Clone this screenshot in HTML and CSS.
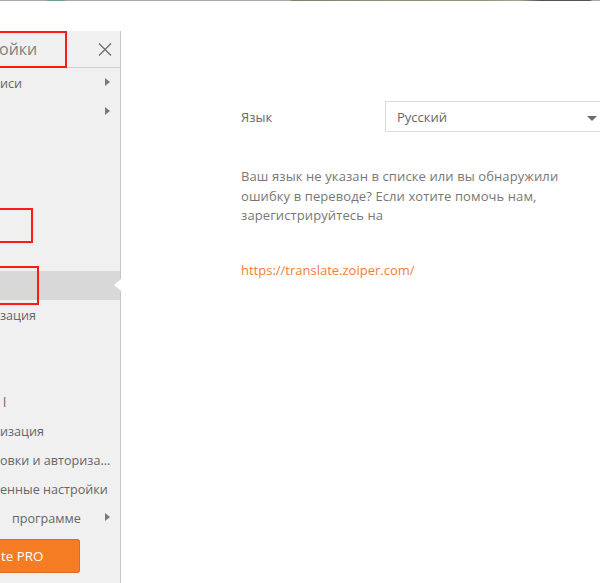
FILE: index.html
```html
<!DOCTYPE html>
<html lang="ru">
<head>
<meta charset="utf-8">
<title>Настройки</title>
<link rel="stylesheet" href="styles.css">
</head>
<body>
<div class="topstrip"></div>
<div class="window">
  <aside class="sidebar">
    <div class="side-head">
      <span class="side-title">ойки</span>
      <svg class="close" width="14" height="13" viewBox="0 0 14 13"><path d="M1 0.5 L13 12.5 M13 0.5 L1 12.5" stroke="#6a6a6a" stroke-width="1.2" fill="none"/></svg>
      <span class="mark mark-title"></span>
    </div>
    <ul class="menu">
      <li class="item has-sub">иси</li>
      <li class="item has-sub"></li>
      <li class="item"></li>
      <li class="item"></li>
      <li class="item"></li>
      <li class="item"></li>
      <li class="item"></li>
      <li class="item selected"><span class="notch"></span></li>
      <li class="item">зация</li>
      <li class="item"></li>
      <li class="item"></li>
      <li class="item"><span class="cut-l">l</span></li>
      <li class="item">изация</li>
      <li class="item">овки и авториза...</li>
      <li class="item">енные настройки</li>
      <li class="item has-sub"><span class="cut-o">программе</span></li>
    </ul>
    <div class="pro-wrap"><button class="pro">te PRO</button></div>
    <span class="mark mark-a"></span>
    <span class="mark mark-b"></span>
  </aside>
  <main class="main">
    <div class="lang-row">
      <span class="lang-label">Язык</span>
      <div class="select">
        <span>Русский</span>
        <span class="caret"></span>
      </div>
    </div>
    <p class="note">Ваш язык не указан в списке или вы обнаружили ошибку в переводе? Если хотите помочь нам, зарегистрируйтесь на</p>
    <a class="link" href="#">https://translate.zoiper.com/</a>
  </main>
</div>
</body>
</html>
```

FILE: styles.css
```css
* { box-sizing: border-box; }
html, body {
  margin: 0;
  padding: 0;
  width: 600px;
  height: 583px;
  overflow: hidden;
  background: #ffffff;
  font-family: "Open Sans", "Noto Sans", sans-serif;
}
.topstrip {
  height: 1px;
  background: linear-gradient(to right, #a9a9a9 0, #a9a9a9 45px, #6f9a8e 48px, #6f9a8e 64px, #a9a9a9 67px, #a9a9a9 290px, #76856a 292px, #8a9470 400px, #8f9672 480px, #a6a58a 520px, #5b4f52 540px, #5d4f55 590px, #a9a9a9 592px);
}
.window {
  display: flex;
  margin-top: 30px;
  height: 552px;
}
.sidebar {
  position: relative;
  width: 121px;
  flex: none;
  background: #f0f0f0;
  border-right: 1px solid #c6c6c6;
  display: flex;
  flex-direction: column;
}
.side-head {
  position: relative;
  height: 37px;
  border-bottom: 1px solid #d2d2d2;
  display: flex;
  align-items: center;
  justify-content: space-between;
  padding: 0 8px 0 0;
}
.side-title {
  font-size: 16px;
  color: #808080;
  margin-left: -1px;
}
.close { display: block; margin-top: 1px; }
.menu {
  list-style: none;
  margin: 0;
  padding: 0;
}
.item {
  position: relative;
  height: 29px;
  line-height: 29px;
  padding-top: 1px;
  font-size: 12.6px;
  color: #666666;
  white-space: nowrap;
  overflow: visible;
}
.item.has-sub::after {
  content: "";
  position: absolute;
  right: 10px;
  top: 10px;
  border-left: 5px solid #7a7a7a;
  border-top: 4.5px solid transparent;
  border-bottom: 4.5px solid transparent;
}
.item.selected { background: #d8d8d8; }
.notch {
  position: absolute;
  right: -1px;
  top: 8px;
  width: 0;
  height: 0;
  border-right: 7px solid #ffffff;
  border-top: 6px solid transparent;
  border-bottom: 6px solid transparent;
}
.cut-l { padding-left: 3px; }
.cut-o { padding-left: 12px; }
.pro-wrap { padding-top: 7px; }
.pro {
  display: block;
  width: 80px;
  height: 34px;
  margin: 0;
  padding: 0 0 0 1px;
  text-align: left;
  background: #f57c22;
  border: 1px solid #df6a27;
  border-left: 0;
  border-radius: 0 3px 3px 0;
  color: #ffffff;
  font-family: "Open Sans", "Noto Sans", sans-serif;
  font-size: 13.4px;
}
.mark {
  position: absolute;
  border: 2px solid #ff1a1a;
  left: -10px;
  pointer-events: none;
}
.mark-title { top: 0; height: 37px; width: 77px; }
.mark-a { top: 177px; height: 35px; width: 43px; }
.mark-b { top: 235px; height: 39px; width: 49px; }
.main {
  flex: 1;
  padding: 70px 0 0 120px;
  color: #777777;
  font-size: 13px;
}
.lang-row {
  display: flex;
  align-items: center;
  height: 31px;
}
.lang-label {
  width: 144px;
  flex: none;
  color: #666666;
}
.select {
  flex: none;
  width: 230px;
  height: 31px;
  border: 1px solid #dcdcdc;
  display: flex;
  align-items: center;
  padding-left: 11px;
  color: #666666;
  position: relative;
}
.caret {
  position: absolute;
  left: 201px;
  top: 14px;
  border-top: 5px solid #6a6a6a;
  border-left: 5px solid transparent;
  border-right: 5px solid transparent;
}
.note {
  margin: 35px 0 0 0;
  width: 340px;
  line-height: 19.5px;
  letter-spacing: 0.1px;
  color: #777777;
}
.link {
  display: block;
  margin-top: 35px;
  line-height: 19.5px;
  color: #f47b3e;
  text-decoration: none;
}
```
